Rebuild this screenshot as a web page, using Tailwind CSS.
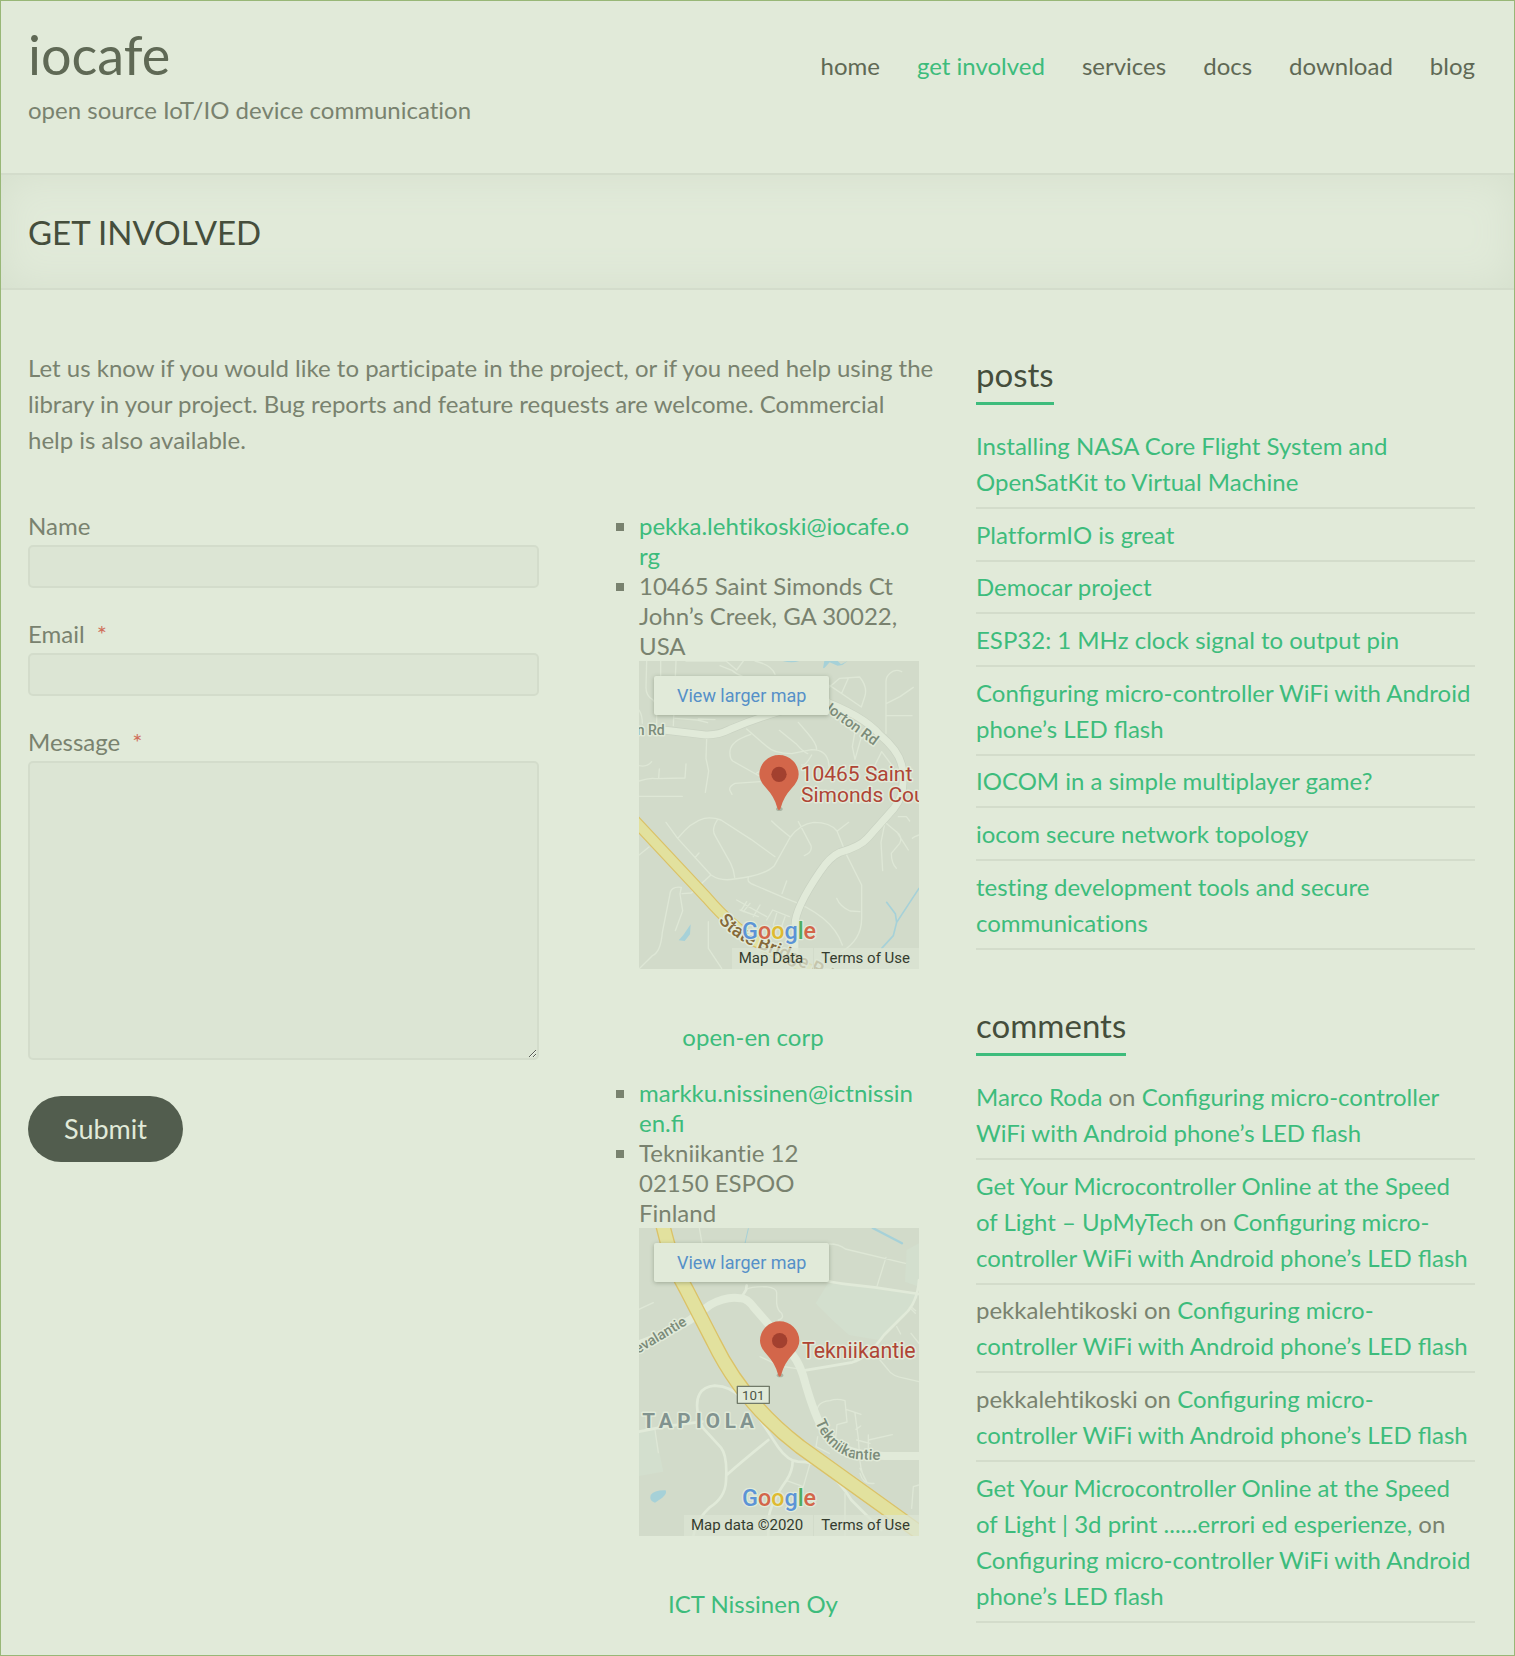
<!DOCTYPE html>
<html lang="en">
<head>
<meta charset="utf-8">
<meta name="viewport" content="width=device-width, initial-scale=1">
<title>get involved – iocafe</title>
<script src="https://cdn.jsdelivr.net/npm/@tailwindcss/browser@4"></script>
</head>
<body class="bg-[#e1ead9]">
<div class="min-h-screen border border-[#98b777] bg-[#e1ead9] pb-8 font-['Lato',sans-serif] text-[24px] leading-[36px] text-[#79826f] [font-variant-ligatures:no-common-ligatures]">

  <header class="flex items-start justify-between border-b-2 border-[#d3dccb] pt-[22px] pr-[39px] pb-[45px] pl-[27px]">
    <div>
      <a href="#" class="block text-[54px] leading-[64px] text-[#5f6955]">iocafe</a>
      <p class="mt-[5px]">open source IoT/IO device communication</p>
    </div>
    <nav class="mt-[25px] flex gap-[37px] text-[#5f6955]">
      <a href="#">home</a>
      <a href="#" class="text-[#3dbc7c]" aria-current="page">get involved</a>
      <a href="#">services</a>
      <a href="#">docs</a>
      <a href="#">download</a>
      <a href="#">blog</a>
    </nav>
  </header>

  <div class="border-b-2 border-[#d3dccb] pt-[37px] pr-[39px] pb-[35px] pl-[27px] shadow-[inset_0_0_42px_#d5dfcd]">
    <h1 class="text-[33px] leading-[41px] text-[#454e3c]">GET INVOLVED</h1>
  </div>

  <div class="grid grid-cols-[minmax(0,891fr)_minmax(0,499fr)] gap-[57px] pr-[39px] pl-[27px]">
    <main class="pt-[60px]">
      <p class="-mr-6">Let us know if you would like to participate in the project, or if you need help using the library in your project. Bug reports and feature requests are welcome. Commercial<br>help is also available.</p>

      <div class="mt-[53px] grid grid-cols-[minmax(0,511fr)_minmax(0,332fr)] gap-12 leading-[30px]">
        <form>
          <label for="name" class="block">Name</label>
          <input id="name" type="text" class="mt-1 block h-[43px] w-full rounded-[5px] border-2 border-[#d3dccb] bg-[#dce5d4] px-3">
          <label for="email" class="mt-[31px] flex gap-3">Email <span class="text-[#d0705c]">*</span></label>
          <input id="email" type="email" required class="mt-1 block h-[43px] w-full rounded-[5px] border-2 border-[#d3dccb] bg-[#dce5d4] px-3 shadow-none">
          <label for="message" class="mt-[31px] flex gap-3">Message <span class="text-[#d0705c]">*</span></label>
          <textarea id="message" required class="mt-1 block h-[299px] w-full resize rounded-[5px] border-2 border-[#d3dccb] bg-[#dce5d4] px-3 shadow-none"></textarea>
          <button type="submit" class="mt-[36px] block h-[66px] rounded-full bg-[#525d4e] px-[36px] text-[27px] text-[#e1ead9]">Submit</button>
        </form>

        <div>
          <ul class="list-[square] pl-[52px]">
            <li><a href="#" class="break-all text-[#3dbc7c]">pekka.lehtikoski@iocafe.o<br>rg</a></li>
            <li>10465 Saint Simonds Ct<br>John’s Creek, GA 30022, USA
              <div class="relative h-[308px] w-full overflow-hidden bg-[#d2dbca] font-['Roboto',sans-serif]">
                <svg class="block h-full w-full" viewBox="27 18 840 924" preserveAspectRatio="xMidYMid slice" fill="none" stroke-linecap="round" stroke-linejoin="round" font-family="Roboto, sans-serif">
                  <g fill="#a6d1d8">
                    <path d="M458 18h50q-22 8-50 0zM583 18l40 0 10 10 20-10-16 12-14 2-24-10-15 16-5 2z"/>
                    <path d="M182 808l-2 30-16 20-18-2 14-16z"/>
                  </g>
                  <path d="M867 700L800 802 790 842 755 880M770 742l26 34 4 26" stroke="#a6d1d8" stroke-width="5"/>
                  <g stroke="#dee7d6" stroke-width="4">
                    <path d="M50 18l-2 80q0 24 20 36l15 20M92 18v60M80 180v30M138 18l-8 194M135 190l68 5 30 8M168 18l120 0 32 27 20-27M270 32l36 14q12 12 32 18M205 192l50 2M375 18q50 12 60 40M27 165q10 15 10 40M594 100l35-30 60-4q25 30 15 60l-10 30-95-65M655 70l-20 45M815 50q-20-10-35 5-12 10-12 25v155M770 145l40-20 40-28M770 182h76"/>
                    <path d="M230 250l-2 60 8 38-10 64M27 332q25 5 38-12M27 378q30-10 50-7l88-2 3-42M88 342l-2 26M27 424h130M350 222l60 52q22 22 75 22l60-12q50 0 52 50M362 238q-60 20-62 50-2 20 8 30l80 45M390 380l-75 5q-20 10-15 22l6 11M398 344l-18 10M448 226l50 40q20 24 35 30M505 202l30 35q25 30 25 45M545 300q-20 35-30 30M675 230l-8 45 8 38 25-88M755 290l-20 40M755 290l30 40"/>
                    <path d="M108 502l35 48 100 110q30 20 70 12 90-10 120-40l48-86q30-40 70-44 50 0 70 26l28 70 46 92v100q0 65-60 100M143 550q40-50 80-60 25-4 50 5l90 58 72 52M262 495q-20 30-5 50l45 80q10 20 12 42M425 498q20 20 55 47M505 500l38 72q5 20-20 30M622 528l34-26M195 608l12-14M240 662l-56 52-28 2M27 600l30-24M355 668q-5 15 18 22l94 40q140 50 170 140M456 716l14-38M620 730q10 25 40 38l30 2M27 942l40-40q25-10 30-70l22-110q2-30 35-25l-4 20 8 50-22 60M235 800v80l40 60M320 735l90 50M350 740l-15 24M390 750l-20 35M330 765l55 20M410 795l18-30 50 20M440 775l-10 35M465 785l-10 30M340 770l20-25"/>
                    <path d="M765 502l-12 60 5 85M765 502l42 35q10 15 2 28l-25 30q0 30 15 45M805 485l24 0 10 13M800 530l35 55M867 540q-15 5-20 10"/>
                  </g>
                  <path d="M100 225l120 14q40 4 80-16 70-30 150-54L560 130Q700 180 750 240 822 300 818 360 825 420 792 460L712 550Q690 575 630 592 600 605 570 650 495 760 495 810V942" stroke="#c9d2c2" stroke-width="25"/>
                  <path d="M100 225l120 14q40 4 80-16 70-30 150-54L560 130Q700 180 750 240 822 300 818 360 825 420 792 460L712 550Q690 575 630 592 600 605 570 650 495 760 495 810V942" stroke="#e1ead9" stroke-width="21"/>
                  <path d="M0 482L230 728Q310 820 380 860T570 960" stroke="#dbc267" stroke-width="36"/>
                  <path d="M0 482L230 728Q310 820 380 860T570 960" stroke="#e2e19e" stroke-width="29"/>
                  <path id="bridge" d="M264 798Q318 858 390 882 470 912 600 980"/>
                  <g font-weight="500" paint-order="stroke" stroke="#e1ead9" stroke-width="9">
                    <text x="20" y="241" font-size="42" fill="#7b8b79">n Rd</text>
                    <text transform="translate(570 155) rotate(36)" font-size="44" fill="#7b8b79">Norton Rd</text>
                    <text font-size="55" fill="#85693a"><textPath href="#bridge">State Bridge Rd</textPath></text>
                  </g>
                  <ellipse cx="448" cy="462" rx="10" ry="6" fill="#aab5a4"/>
                  <path d="M447 466q-4 0-6-10-8-30-32-56-21-22-21-42a59 58 0 01118 0q0 20-21 42-24 26-32 56-2 10-6 10z" fill="#d3664a"/>
                  <circle cx="447" cy="358" r="23" fill="#a3402f"/>
                  <g font-size="63" fill="#af4535" paint-order="stroke" stroke="#e1ead9" stroke-width="9">
                    <text x="512" y="378">10465 Saint</text>
                    <text x="513" y="441">Simonds Court</text>
                  </g>
                  <text x="336" y="851" font-size="70" font-weight="500" paint-order="stroke" stroke="#e1ead9" stroke-width="8"><tspan fill="#5c94d6">G</tspan><tspan fill="#d3664a">o</tspan><tspan fill="#dfba30">o</tspan><tspan fill="#5c94d6">g</tspan><tspan fill="#4fae60">l</tspan><tspan fill="#d3664a">e</tspan></text>
                </svg>
                <a href="#" class="absolute top-[15px] left-[15px] rounded-[2px] bg-[#e1ead9] px-[23px] text-[18px] leading-[39px] whitespace-nowrap text-[#5590c8] shadow-[0_1px_4px_rgba(60,75,50,0.35)]">View larger map</a>
                <div class="absolute right-0 bottom-0 flex text-[15px] leading-[21px] whitespace-nowrap text-[#343c2e]">
                  <button type="button" class="bg-[#dbe4d3]/75 pr-[10px] pl-[7px]">Map Data</button>
                  <a href="#" class="border-l border-[#d2dbca] bg-[#dbe4d3]/75 pr-[9px] pl-[7px]">Terms of Use</a>
                </div>
              </div>
            </li>
          </ul>
          <p class="mt-[50px] text-center leading-[36px]"><a href="#" class="text-[#3dbc7c]">open-en corp</a></p>

          <ul class="mt-[23px] list-[square] pl-[52px]">
            <li><a href="#" class="break-all text-[#3dbc7c] [font-variant-ligatures:common-ligatures]">markku.nissinen@ictnissinen.fi</a></li>
            <li>Tekniikantie 12<br>02150 ESPOO<br>Finland
              <div class="relative h-[308px] w-full overflow-hidden bg-[#d2dbca] font-['Roboto',sans-serif]">
                <svg class="block h-full w-full" viewBox="27 24 840 924" preserveAspectRatio="xMidYMid slice" fill="none" stroke-linecap="round" stroke-linejoin="round" font-family="Roboto, sans-serif">
                  <path d="M594 190l140 15 133 20-30 50-90 85-90-15-50-45-50-50zM27 630h48l25 125-73 13zM830 90l37-20v130l-42-15z" fill="#d3dfce"/>
                  <path d="M62 825q10-15 45-14 5 10-10 22l-22 15q-18-5-13-23z" fill="#a6d1d8"/>
                  <path d="M728 24l88 46" stroke="#a6d1d8" stroke-width="7"/>
                  <path d="M355 26l-10 44" stroke="#a6d1d8" stroke-width="3"/>
                  <g stroke="#dee7d6" stroke-width="4">
                    <path d="M208 24l8 46M27 268l43-20M350 208q10-8 60-8 32 5 30 20v30q2 20 15 30 8 16-10 20M598 72q30 0 48 15l180 43M768 112l-28 90M845 262l12 10M800 320l12 22M838 262l18 18M843 340l24 30M750 420l25 30q10 18 50 25l42 10M390 410l60 28 50 8M75 630l10 68M645 820v128M850 800l-5 65M867 795l-17 5M540 730l-20 70-50-18M560 600q-10-55 40-58 20-8 45 0l6 64-30 8-4 40M648 568l45 15M675 580l10 75 5 70q5 40 20 60l-20-40M678 628l14-10M680 660l40 10M715 645v45M715 660l72-16M690 760q10 35 42 30M598 700l-40-20 5-30"/>
                  </g>
                  <g stroke="#e1ead9" stroke-width="8">
                    <path d="M350 196l-2 14-10 16M594 183q20 6 60 10l80 9 133 20M867 180q-5 70-45 105l-60 60q-50 70-95 82l-75 13-72 12M27 635l80-16 110-14M190 948q10-50 48-85 48-30 50-80 5-75-15-100l-55-60q-10-20-14-40-15-80 50-86 50 2 80 38 30 25 60 70l50 76q30 42 60 44 50 0 80 25 50 40 80 90l90 90M415 660q-80 65-124 104M488 722q0 30-18 58-50 70-55 120v48"/>
                  </g>
                  <path d="M0 380Q80 360 180 300l60-45q50-28 92-20 20 0 40 28l70 80 45 60q25 30 40 90Q555 590 585 640 640 710 770 708h97" stroke="#e1ead9" stroke-width="24"/>
                  <path d="M95 0Q125 135 170 210L250 365Q340 550 510 680L900 960" stroke="#dbc267" stroke-width="46"/>
                  <path d="M95 0Q125 135 170 210L250 365Q340 550 510 680L900 960" stroke="#e2e19e" stroke-width="38"/>
                  <path id="teknii" d="M556 606Q595 700 680 717 750 722 800 719"/>
                  <g font-weight="500" paint-order="stroke" stroke="#e1ead9" stroke-width="9">
                    <text transform="translate(24 402) rotate(-31)" font-size="43" fill="#7b8b79">evalantie</text>
                    <text font-size="45" fill="#7b8b79"><textPath href="#teknii">Tekniikantie</textPath></text>
                    <text y="624" font-size="62" font-weight="700" fill="#81938f" x="37 86 142 197 227 284 330">TAPIOLA</text>
                  </g>
                  <rect x="322" y="499" width="96" height="51" fill="#e1ead9" stroke="#717a69" stroke-width="4"/>
                  <text x="370" y="539" text-anchor="middle" font-size="40" fill="#4d5646">101</text>
                  <ellipse cx="450" cy="466" rx="10" ry="6" fill="#aab5a4"/>
                  <path d="M449 470q-4 0-6-10-8-30-32-56-21-22-21-42a59 58 0 01118 0q0 20-21 42-24 26-32 56-2 10-6 10z" fill="#d3664a"/>
                  <circle cx="449" cy="362" r="23" fill="#a3402f"/>
                  <text x="516" y="413" font-size="64" fill="#af4535" paint-order="stroke" stroke="#e1ead9" stroke-width="9">Tekniikantie</text>
                  <text x="336" y="857" font-size="70" font-weight="500" paint-order="stroke" stroke="#e1ead9" stroke-width="8"><tspan fill="#5c94d6">G</tspan><tspan fill="#d3664a">o</tspan><tspan fill="#dfba30">o</tspan><tspan fill="#5c94d6">g</tspan><tspan fill="#4fae60">l</tspan><tspan fill="#d3664a">e</tspan></text>
                </svg>
                <a href="#" class="absolute top-[15px] left-[15px] rounded-[2px] bg-[#e1ead9] px-[23px] text-[18px] leading-[39px] whitespace-nowrap text-[#5590c8] shadow-[0_1px_4px_rgba(60,75,50,0.35)]">View larger map</a>
                <div class="absolute right-0 bottom-0 flex text-[15px] leading-[21px] whitespace-nowrap text-[#343c2e]">
                  <span class="bg-[#dbe4d3]/75 pr-[10px] pl-[7px]">Map data ©2020</span>
                  <a href="#" class="border-l border-[#d2dbca] bg-[#dbe4d3]/75 pr-[9px] pl-[7px]">Terms of Use</a>
                </div>
              </div>
            </li>
          </ul>
          <p class="mt-[50px] text-center leading-[36px]"><a href="#" class="text-[#3dbc7c]">ICT Nissinen Oy</a></p>
        </div>
      </div>
    </main>

    <aside class="pt-[64px]">
      <section>
        <h2 class="w-fit border-b-[3px] border-[#3dbc7c] pb-2 text-[33px] leading-[40px] text-[#454e3c]">posts</h2>
        <ul class="mt-[15px] text-[#3dbc7c] *:border-b-2 *:border-[#d3dccb] *:pt-[8px] *:pb-[7px] [&>:nth-child(3n)]:pt-[7px]">
          <li><a href="#">Installing NASA Core Flight System and OpenSatKit to Virtual Machine</a></li>
          <li><a href="#">PlatformIO is great</a></li>
          <li><a href="#">Democar project</a></li>
          <li><a href="#">ESP32: 1 MHz clock signal to output pin</a></li>
          <li><a href="#" class="[font-variant-ligatures:common-ligatures]">Configuring micro-controller WiFi with Android phone’s LED flash</a></li>
          <li><a href="#">IOCOM in a simple multiplayer game?</a></li>
          <li><a href="#">iocom secure network topology</a></li>
          <li><a href="#">testing development tools and secure communications</a></li>
        </ul>
      </section>
      <section class="mt-[55px]">
        <h2 class="w-fit border-b-[3px] border-[#3dbc7c] pb-2 text-[33px] leading-[40px] text-[#454e3c]">comments</h2>
        <ul class="mt-[15px] *:border-b-2 *:border-[#d3dccb] *:pt-[8px] *:pb-[7px] [&>:nth-child(3n)]:pt-[7px]">
          <li><a href="#" class="text-[#3dbc7c]">Marco Roda</a> on <a href="#" class="text-[#3dbc7c] [font-variant-ligatures:common-ligatures]">Configuring micro-controller WiFi with Android phone’s LED flash</a></li>
          <li><a href="#" class="text-[#3dbc7c]">Get Your Microcontroller Online at the Speed of Light – UpMyTech</a> on <a href="#" class="text-[#3dbc7c] [font-variant-ligatures:common-ligatures]">Configuring micro-controller WiFi with Android phone’s LED flash</a></li>
          <li>pekkalehtikoski on <a href="#" class="text-[#3dbc7c] [font-variant-ligatures:common-ligatures]">Configuring micro-<br>controller WiFi with Android phone’s LED flash</a></li>
          <li>pekkalehtikoski on <a href="#" class="text-[#3dbc7c] [font-variant-ligatures:common-ligatures]">Configuring micro-<br>controller WiFi with Android phone’s LED flash</a></li>
          <li><a href="#" class="text-[#3dbc7c]">Get Your Microcontroller Online at the Speed of Light | 3d print ......errori ed esperienze,</a> on <a href="#" class="text-[#3dbc7c] [font-variant-ligatures:common-ligatures]">Configuring micro-controller WiFi with Android phone’s LED flash</a></li>
        </ul>
      </section>
    </aside>
  </div>
</div>
</body>
</html>
